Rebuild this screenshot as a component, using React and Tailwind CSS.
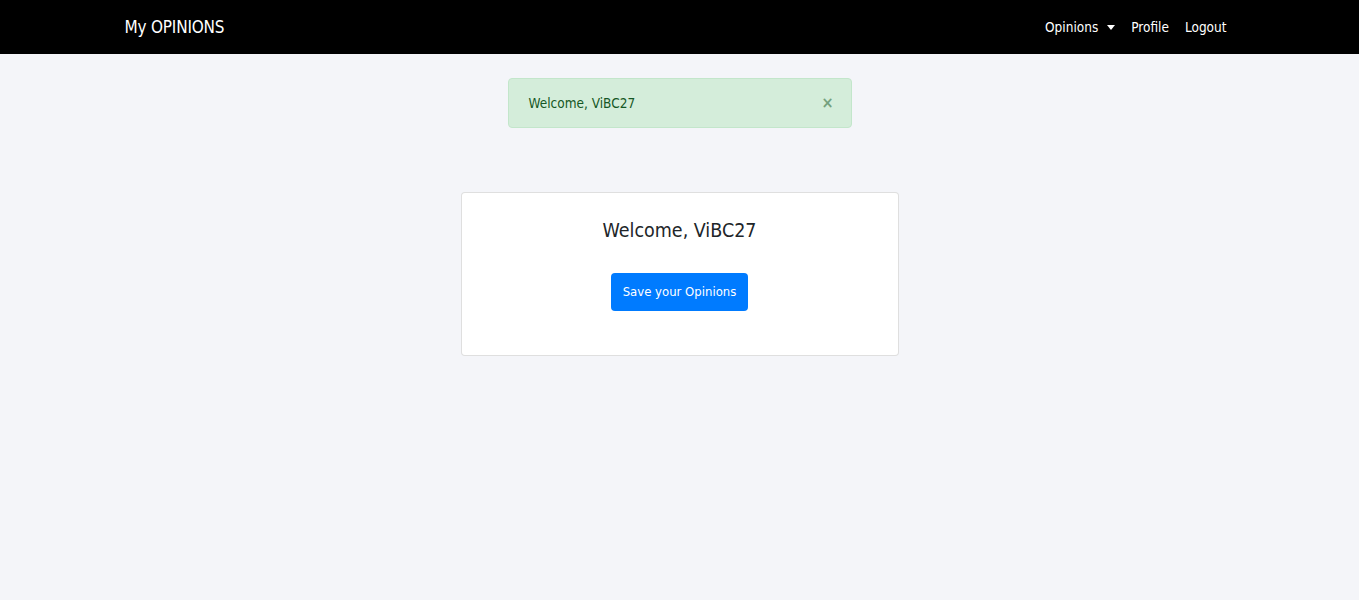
export default function App() {
    const font = { fontFamily: '"DejaVu Sans Condensed", "Liberation Sans Narrow", "Liberation Sans", sans-serif' };

    return (
        <div className="min-h-[600px] bg-[#f4f5f9] text-[#212529]" style={font}>
            <nav className="bg-black h-[54px]">
                <div className="max-w-[1140px] mx-auto px-[15px] h-full flex items-center justify-between">
                    <span className="text-white text-[17px] tracking-[-0.2px] pt-[2px]">My OPINIONS</span>
                    <div className="flex items-center gap-4 text-white text-[13.5px] pr-2">
                        <span className="flex items-center">
                            Opinions
                            <span className="ml-[9px] w-0 h-0 border-l-[4px] border-r-[4px] border-t-[5px] border-l-transparent border-r-transparent border-t-white" />
                        </span>
                        <span>Profile</span>
                        <span>Logout</span>
                    </div>
                </div>
            </nav>

            <div className="flex flex-col items-center">
                <div className="mt-6 w-[344px] h-[50px] flex items-center justify-between pl-5 pr-[17px] bg-[#d4edda] border border-[#c3e6cb] rounded text-[#155724] text-[13.5px]">
                    <span>Welcome, ViBC27</span>
                    <span className="text-[#155724] opacity-50 text-[16px] font-bold leading-none">×</span>
                </div>

                <div className="mt-16 w-[438px] h-[164px] bg-white border border-black/[.125] rounded flex flex-col items-center">
                    <h2 className="mt-[22px] h-[31px] leading-[31px] text-[19.5px] text-[#212529]">Welcome, ViBC27</h2>
                    <button className="mt-[27px] bg-[#007bff] text-white text-[13px] px-3 h-[38px] rounded">
                        Save your Opinions
                    </button>
                </div>
            </div>
        </div>
    );
}
